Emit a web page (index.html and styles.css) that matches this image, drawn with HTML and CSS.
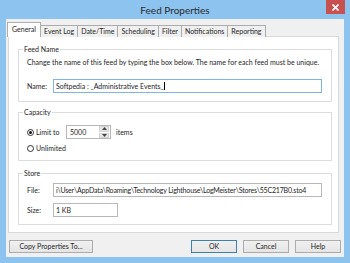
FILE: index.html
```html
<!DOCTYPE html>
<html>
<head>
<meta charset="utf-8">
<link rel="stylesheet" href="styles.css">
</head>
<body>

<div class="window">
  <div class="titlebar">
    <span class="title">Feed Properties</span>
    <span class="close">
      <svg width="7" height="7" viewBox="0 0 7 7"><path d="M0.5 0.5 L6.5 6.5 M6.5 0.5 L0.5 6.5" stroke="#fff" stroke-width="1.6"/></svg>
    </span>
  </div>

  <div class="client">
    <div class="tabs">
      <span class="tab active">General</span>
      <span class="tab">Event Log</span>
      <span class="tab">Date/Time</span>
      <span class="tab">Scheduling</span>
      <span class="tab">Filter</span>
      <span class="tab">Notifications</span>
      <span class="tab">Reporting</span>
    </div>

    <div class="panel">
      <fieldset class="group feedname">
        <legend>Feed Name</legend>
        <p class="desc">Change the name of this feed by typing the box below. The name for each feed must be unique.</p>
        <div class="row name-row">
          <span class="label">Name:</span>
          <span class="textbox focused">Softpedia : _Administrative Events_<span class="caret"></span></span>
        </div>
      </fieldset>

      <fieldset class="group capacity">
        <legend>Capacity</legend>
        <div class="row limit-row">
          <span class="radio checked"></span>
          <span class="radio-label">Limit to</span>
          <span class="spinbox">
            <span class="spin-value">5000</span>
            <span class="spin-buttons">
              <span class="spin-btn"><svg width="5" height="3" viewBox="0 0 5 3"><path d="M0 3 L2.5 0 L5 3 Z" fill="#444"/></svg></span>
              <span class="spin-btn"><svg width="5" height="3" viewBox="0 0 5 3"><path d="M0 0 L2.5 3 L5 0 Z" fill="#444"/></svg></span>
            </span>
          </span>
          <span class="items">items</span>
        </div>
        <div class="row unlimited-row">
          <span class="radio"></span>
          <span>Unlimited</span>
        </div>
      </fieldset>

      <fieldset class="group store">
        <legend>Store</legend>
        <div class="row">
          <span class="label">File:</span>
          <span class="textbox file">i\User\AppData\Roaming\Technology Lighthouse\LogMeister\Stores\55C217B0.sto4</span>
        </div>
        <div class="row size-row">
          <span class="label">Size:</span>
          <span class="textbox size">1 KB</span>
        </div>
      </fieldset>
    </div>

    <div class="buttons">
      <span class="btn copy">Copy Properties To...</span>
      <span class="spacer"></span>
      <span class="btn default">OK</span>
      <span class="btn">Cancel</span>
      <span class="btn">Help</span>
    </div>
  </div>
</div>

</body>
</html>
```

FILE: styles.css
```css
html, body
{
	margin: 0;
	padding: 0;
}

body
{
	font-family: Lato, "Liberation Sans", sans-serif;
	font-size: 7px;
	color: #1e1e1e;
}

.window
{
	width: 350px;
	height: 263px;
	background-color: #8cc3ef;
	display: flex;
	flex-direction: column;
	box-sizing: border-box;
}

.titlebar
{
	height: 19px;
	display: grid;
	grid-template-columns: 1fr auto 1fr;
}

.title
{
	grid-column: 2;
	font-size: 10px;
	line-height: 20px;
	color: #2b2b2b;
}

.close
{
	grid-column: 3;
	justify-self: end;
	align-self: start;
	width: 19px;
	height: 14px;
	margin-right: 5px;
	background-color: #c75050;
	display: flex;
	align-items: center;
	justify-content: center;
}

.client
{
	flex: 1;
	margin: 0 6px 6px 6px;
	background-color: #f0f0f0;
	padding: 3px 0 4px 0;
	display: flex;
	flex-direction: column;
}

.tabs
{
	display: flex;
	align-items: flex-end;
	padding-left: 3px;
	margin-bottom: -1px;
	position: relative;
	z-index: 1;
}

.tab
{
	height: 12px;
	line-height: 11px;
	padding: 0 3px;
	border: solid 1px #acacac;
	border-bottom: none;
	background-color: #f0f0f0;
	margin-right: -1px;
	box-sizing: border-box;
	white-space: nowrap;
}

.tab.active
{
	height: 15px;
	line-height: 13px;
	padding: 0 4px;
	background-color: #ffffff;
	margin-left: -2px;
	margin-right: -1px;
	position: relative;
	z-index: 2;
}

.panel
{
	margin: 0 5px 0 2px;
	height: 197px;
	box-sizing: border-box;
	background-color: #ffffff;
	border: solid 1px #d9d9d9;
	padding: 8px 6px 0 9px;
}

.group
{
	margin: 0;
	border: solid 1px #dcdcdc;
	padding: 0 9px 0 8px;
	min-width: 0;
}

.group legend
{
	padding: 0 1px;
	margin-left: -4px;
	line-height: 8px;
}

.desc
{
	margin: 5px 0 0 0;
	line-height: 9px;
	white-space: nowrap;
}

.row
{
	display: flex;
	align-items: center;
}

.label
{
	width: 26px;
	flex: none;
}

.textbox
{
	flex: 1;
	height: 14px;
	line-height: 12px;
	box-sizing: border-box;
	border: solid 1px #b8b8b8;
	background-color: #ffffff;
	padding: 0 2px;
	white-space: nowrap;
	overflow: hidden;
}

.textbox.focused
{
	border-color: #7eb4ea;
}

.textbox.file
{
	letter-spacing: -0.17px;
}

.caret
{
	display: inline-block;
	width: 1px;
	height: 8px;
	background-color: #000;
	vertical-align: -1px;
}

.feedname
{
	padding-bottom: 8px;
}

.name-row
{
	margin-top: 12px;
}

.capacity
{
	margin-top: 6px;
	padding-top: 9px;
	padding-bottom: 7px;
}

.radio
{
	width: 7px;
	height: 7px;
	box-sizing: border-box;
	border: solid 1px #333;
	border-radius: 50%;
	background-color: #fff;
	margin-right: 2px;
	flex: none;
	display: flex;
	align-items: center;
	justify-content: center;
}

.radio.checked::after
{
	content: "";
	width: 3px;
	height: 3px;
	border-radius: 50%;
	background-color: #111;
}

.radio-label
{
	width: 30px;
}

.spinbox
{
	width: 45px;
	height: 14px;
	box-sizing: border-box;
	border: solid 1px #b8b8b8;
	display: flex;
	background-color: #fff;
}

.spin-value
{
	flex: 1;
	padding-left: 3px;
	line-height: 12px;
}

.spin-buttons
{
	width: 10px;
	display: flex;
	flex-direction: column;
	gap: 1px;
	padding: 0 1px 0 0;
}

.spin-btn
{
	flex: 1;
	background-color: #e6e6e6;
	border: solid 1px #d4d4d4;
	display: flex;
	align-items: center;
	justify-content: center;
}

.items
{
	margin-left: 5px;
}

.unlimited-row
{
	margin-top: 4px;
	height: 10px;
}

.store
{
	margin-top: 8px;
	padding-top: 6px;
	padding-bottom: 7px;
}

.size-row
{
	margin-top: 6px;
}

.textbox.size
{
	flex: none;
	width: 65px;
}

.buttons
{
	display: flex;
	gap: 6px;
	padding: 0 3px;
	margin-top: 7px;
}

.spacer
{
	flex: 1;
}

.btn
{
	width: 46px;
	height: 13px;
	line-height: 11px;
	text-align: center;
	box-sizing: border-box;
	border: solid 1px #acacac;
	background: linear-gradient(#f0f0f0, #e5e5e5);
}

.btn.copy
{
	width: 84px;
}

.btn.default
{
	border-color: #3c7fb1;
}
```
